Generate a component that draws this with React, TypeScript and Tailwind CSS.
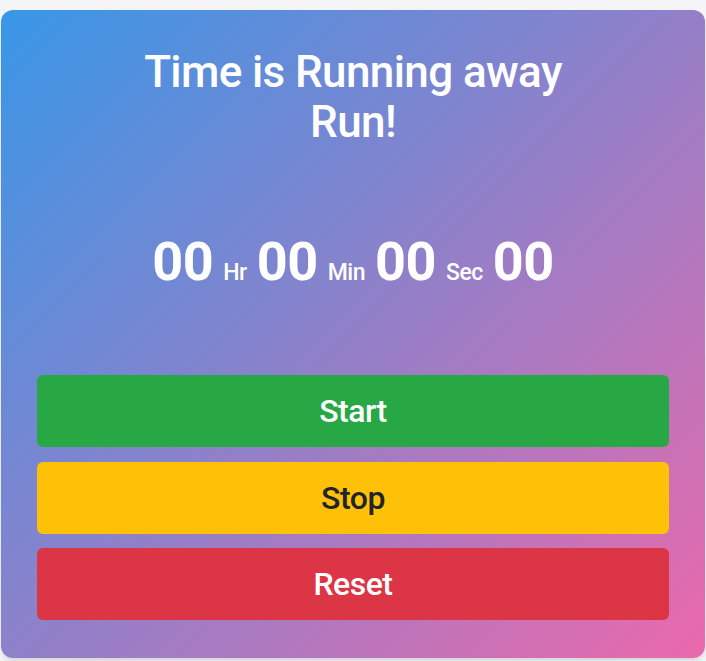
const font = { fontFamily: "Roboto, 'Noto Sans', sans-serif" };

function TimeUnit({ value, label }: { value: string; label?: string }) {
  return (
    <>
      <span className="text-[54px] font-bold leading-[65px] tracking-[-0.5px]">{value}</span>
      {label && <span className="mx-[10px] text-[23px] font-medium leading-none tracking-[-0.5px]">{label}</span>}
    </>
  );
}

const buttons = [
  { label: "Start", className: "bg-[#28a745] text-white" },
  { label: "Stop", className: "bg-[#ffc107] text-[#212529]" },
  { label: "Reset", className: "bg-[#dc3545] text-white" },
];

export default function App() {
  return (
    <div className="min-h-screen bg-[#f5f5f8] pt-[10px]" style={font}>
      <div className="mx-px flex h-[648px] flex-col rounded-xl bg-linear-135/srgb from-[#3897e7] to-[#ea69ab] px-[36px] pt-[37px] text-white shadow-md">
        <h1 className="text-center text-[44px] font-medium leading-[50px] tracking-[-0.6px]">
          Time is Running away
          <br />
          Run!
        </h1>

        <div className="mt-[82px] flex items-baseline justify-center">
          <TimeUnit value="00" label="Hr" />
          <TimeUnit value="00" label="Min" />
          <TimeUnit value="00" label="Sec" />
          <TimeUnit value="00" />
        </div>

        <div className="mt-[81px] flex flex-col gap-[14.5px]">
          {buttons.map((b) => (
            <button
              key={b.label}
              className={`flex h-[72px] items-center justify-center rounded-md text-[32px] font-medium tracking-[-0.5px] ${b.className}`}
            >
              {b.label}
            </button>
          ))}
        </div>
      </div>
    </div>
  );
}
